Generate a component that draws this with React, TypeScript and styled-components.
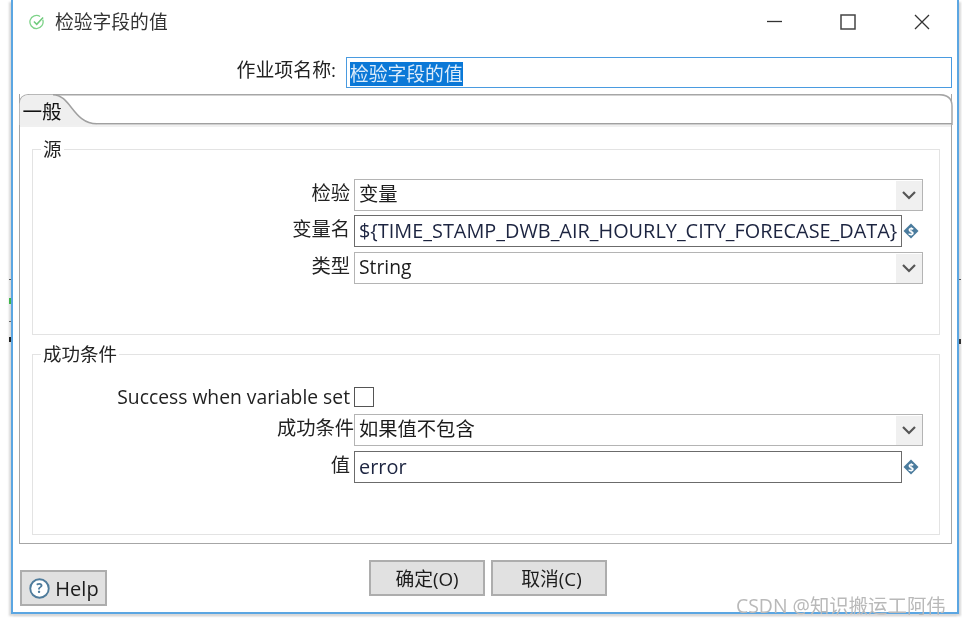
import React from "react";
import styled, { createGlobalStyle } from "styled-components";

const CJK = `"Open Sans", "Noto Sans CJK SC", sans-serif`;

const Global = createGlobalStyle`
  html, body { margin: 0; padding: 0; background: #fff; }
  body { width: 962px; height: 624px; overflow: hidden; font-family: ${CJK}; color: #1c1c1c; }
`;

const Stage = styled.div`
  position: relative;
  width: 962px;
  height: 624px;
  padding-left: 11px;
  box-sizing: border-box;
  background: #fff;
  filter: blur(0.35px);
`;

const Window = styled.div`
  width: 948px;
  height: 614px;
  box-sizing: border-box;
  border: solid #5ba6e2;
  border-width: 0 2px 2px 2px;
  box-shadow: -2px 2px 2px #d8d8d8, 2px 2px 2px #d8d8d8;
  background: #fff;
  display: flex;
  flex-direction: column;
  padding: 0 5px 0 6px;
`;

const PeekMark = styled.span<{ $x: number; $y: number; $c: string; $h?: number }>`
  position: absolute;
  left: ${(p) => p.$x}px;
  top: ${(p) => p.$y}px;
  width: 2px;
  height: ${(p) => p.$h ?? 1}px;
  background: ${(p) => p.$c};
`;

const TitleBar = styled.header`
  height: 44px;
  display: flex;
  align-items: center;
  padding-left: 10px;
  flex: none;
`;

const TitleText = styled.span`
  font-size: 18.8px;
  line-height: 44px;
  margin-left: 10px;
  flex: 1;
  color: #333;
`;

const Controls = styled.div`
  display: flex;
  align-items: center;
  gap: 58px;
  padding-right: 22px;
  color: #333;
`;

const NameRow = styled.div`
  height: 31px;
  margin-top: 13px;
  display: flex;
  align-items: center;
  justify-content: flex-end;
  gap: 10px;
  flex: none;
`;

const NameLabel = styled.label`
  font-size: 18.9px;
  color: #222;
  position: relative;
  top: -4px;
`;

const NameInput = styled.div`
  width: 606px;
  height: 31px;
  box-sizing: border-box;
  border: 1.5px solid #4a9be0;
  display: flex;
  align-items: center;
  padding: 2px 0 0 3px;
  font-size: 18.8px;
`;

const Selected = styled.span`
  background: #0a78d7;
  color: #dcecfa;
  line-height: 24px;
`;

const Folder = styled.section`
  margin-top: 6px;
  width: 933px;
  height: 450px;
  box-sizing: border-box;
  border: 1.5px solid #a6a6a6;
  border-top: none;
  flex: none;
  display: flex;
  flex-direction: column;
`;

const TabStrip = styled.div`
  height: 30px;
  flex: none;
  margin: 0 -1.5px;
  position: relative;
  display: flex;
  align-items: center;
`;

const TabShape = styled.svg`
  position: absolute;
  left: 0;
  top: 0;
`;

const TabLabel = styled.span`
  position: relative;
  font-size: 19.6px;
  padding-left: 4px;
  top: 1px;
  color: #111;
`;

const FolderBody = styled.div`
  flex: 1;
  border-top: 3px solid #f0f0f0;
  padding: 11px 11.5px 8px 12px;
  display: flex;
  flex-direction: column;
`;

const Group = styled.fieldset<{ $height: number; $mt?: number }>`
  margin: ${(p) => p.$mt ?? 0}px 0 0 0;
  padding: 0;
  height: ${(p) => p.$height}px;
  box-sizing: border-box;
  border: 1.5px solid #e3e3e3;
  flex: none;
  min-width: 0;
`;

const GroupTitle = styled.legend`
  font-size: 18.5px;
  line-height: 22px;
  padding: 0 2px 0 2px;
  margin-left: 8px;
  color: #222;
`;

const GroupBody = styled.div<{ $top: number }>`
  padding-top: ${(p) => p.$top}px;
  display: flex;
  flex-direction: column;
`;

const Row = styled.div<{ $mt?: number }>`
  display: flex;
  align-items: stretch;
  margin-top: ${(p) => p.$mt ?? 0}px;
`;

const FieldLabel = styled.label<{ $gap?: number; $lh?: number }>`
  width: 321px;
  flex: none;
  text-align: right;
  font-size: 19.3px;
  line-height: ${(p) => p.$lh ?? 28}px;
  padding-right: ${(p) => p.$gap ?? 4}px;
  box-sizing: border-box;
  color: #222;
  white-space: nowrap;
`;

const Combo = styled.div`
  width: 569px;
  height: 32px;
  box-sizing: border-box;
  border: 1.5px solid #b4b4b4;
  display: flex;
  align-items: center;
  justify-content: space-between;
  font-size: 19.3px;
  padding-left: 4px;
  background: #fff;
`;

const ComboText = styled.span`
  line-height: 26px;
  margin-bottom: 2px;
`;

const ComboArrow = styled.span`
  width: 26px;
  height: 29px;
  background: #f0f0f0;
  display: flex;
  align-items: center;
  justify-content: center;
`;

const TextField = styled.div`
  width: 548px;
  height: 32px;
  box-sizing: border-box;
  border: 1.5px solid #6b6b6b;
  display: flex;
  align-items: center;
  padding: 0 0 2px 4px;
  font-size: 19.9px;
  white-space: nowrap;
  overflow: hidden;
  color: #1c2440;
`;

const VarIcon = styled.svg`
  margin-left: 1px;
  align-self: center;
  flex: none;
`;

const Checkbox = styled.span`
  width: 20px;
  height: 20px;
  box-sizing: border-box;
  border: 1.5px solid #555;
  display: block;
`;

const Footer = styled.footer`
  flex: 1;
  display: flex;
  align-items: flex-start;
`;

const FlatButton = styled.button`
  font-family: inherit;
  background: #e1e1e1;
  border: 2px solid #adadad;
  color: #1c1c1c;
  box-sizing: border-box;
  padding: 0;
  display: flex;
  align-items: center;
  justify-content: center;
`;

const HelpButton = styled(FlatButton)`
  width: 87px;
  height: 36px;
  margin: 26px 0 0 1px;
  font-size: 20px;
  gap: 5px;
  padding-left: 1px;
`;

const ActionButton = styled(FlatButton)<{ $shift?: number }>`
  width: 116px;
  height: 36px;
  margin-top: 16px;
  font-size: 18.8px;
  padding-left: ${(p) => p.$shift ?? 0}px;
`;

const Actions = styled.div`
  display: flex;
  gap: 6px;
  margin-left: 262px;
`;

const Watermark = styled.div`
  position: absolute;
  left: 736px;
  top: 595px;
  font-size: 19.4px;
  line-height: 22px;
  color: #b9b9b9;
  white-space: nowrap;
`;

const Chevron = () => (
  <svg width="16" height="10" viewBox="0 0 16 10">
    <path d="M2 2 L8 8 L14 2" fill="none" stroke="#555" strokeWidth="2.2" />
  </svg>
);

const Dollar = () => (
  <VarIcon width="16" height="16" viewBox="0 0 16 16">
    <path d="M8 0.5 L15.5 8 L8 15.5 L0.5 8 Z" fill="#4a7b9d" />
    <text x="8" y="11.5" textAnchor="middle" fontSize="10" fontWeight="700" fill="#fff" fontFamily="Open Sans">$</text>
  </VarIcon>
);

export default function App() {
  return (
    <Stage>
      <Global />
      <PeekMark $x={9} $y={279} $c="#555" />
      <PeekMark $x={9} $y={298} $c="#3fb54a" $h={6} />
      <PeekMark $x={9} $y={321} $c="#666" />
      <PeekMark $x={9} $y={337} $c="#222" $h={5} />
      <PeekMark $x={959} $y={279} $c="#555" />
      <PeekMark $x={959} $y={339} $c="#333" $h={5} />
      <Window>
        <TitleBar>
          <svg width="16" height="16" viewBox="0 0 17 17">
            <path d="M14.6 6.2 A7 7 0 1 1 11.8 2.6" fill="none" stroke="#7ed389" strokeWidth="1.4" />
            <path d="M5.2 8 L8.2 11 L15 3.6" fill="none" stroke="#6fca7c" strokeWidth="1.6" />
          </svg>
          <TitleText>检验字段的值</TitleText>
          <Controls>
            <svg width="15" height="15" viewBox="0 0 15 15"><path d="M0 6.5 H15" stroke="#333" strokeWidth="1.3" /></svg>
            <svg width="16" height="16" viewBox="0 0 16 16"><rect x="1" y="1" width="14" height="14" fill="none" stroke="#444" strokeWidth="1.5" /></svg>
            <svg width="16" height="16" viewBox="0 0 16 16"><path d="M1 1 L15 15 M15 1 L1 15" stroke="#333" strokeWidth="1.3" /></svg>
          </Controls>
        </TitleBar>
        <NameRow>
          <NameLabel>作业项名称:</NameLabel>
          <NameInput><Selected>检验字段的值</Selected></NameInput>
        </NameRow>
        <Folder>
          <TabStrip>
            <TabShape width="934" height="31" viewBox="0 0 934 31">
              <path d="M0.7 31 V10 Q0.7 0.7 11 0.7 H920 Q933 0.7 933 12 V31" fill="#fff" stroke="#a6a6a6" strokeWidth="1.5" />
              <path d="M0.7 31 V10 Q0.7 0.7 11 0.7 H34 C52 0.7 54 30 78 30 L78 31 Z" fill="#efefef" stroke="none" />
              <path d="M34 0.7 C52 0.7 54 29.8 78 29.8 H933" fill="none" stroke="#a0a0a0" strokeWidth="1.5" />
            </TabShape>
            <TabLabel>一般</TabLabel>
          </TabStrip>
          <FolderBody>
            <Group $height={197}>
              <GroupTitle>源</GroupTitle>
              <GroupBody $top={19}>
                <Row>
                  <FieldLabel>检验</FieldLabel>
                  <Combo><ComboText>变量</ComboText><ComboArrow><Chevron /></ComboArrow></Combo>
                </Row>
                <Row $mt={4}>
                  <FieldLabel>变量名</FieldLabel>
                  <TextField>{"${TIME_STAMP_DWB_AIR_HOURLY_CITY_FORECASE_DATA}"}</TextField>
                  <Dollar />
                </Row>
                <Row $mt={5}>
                  <FieldLabel>类型</FieldLabel>
                  <Combo><ComboText>String</ComboText><ComboArrow><Chevron /></ComboArrow></Combo>
                </Row>
              </GroupBody>
            </Group>
            <Group $height={192} $mt={8}>
              <GroupTitle>成功条件</GroupTitle>
              <GroupBody $top={22}>
                <Row>
                  <FieldLabel $lh={20}>Success when variable set</FieldLabel>
                  <Checkbox />
                </Row>
                <Row $mt={7}>
                  <FieldLabel $gap={0}>成功条件</FieldLabel>
                  <Combo><ComboText>如果值不包含</ComboText><ComboArrow><Chevron /></ComboArrow></Combo>
                </Row>
                <Row $mt={5}>
                  <FieldLabel>值</FieldLabel>
                  <TextField>error</TextField>
                  <Dollar />
                </Row>
              </GroupBody>
            </Group>
          </FolderBody>
        </Folder>
        <Footer>
          <HelpButton>
            <svg width="21" height="21" viewBox="0 0 20 20">
              <circle cx="10" cy="10" r="8.8" fill="#fff" stroke="#4f7c9c" strokeWidth="1.8" />
              <text x="10" y="14.5" textAnchor="middle" fontSize="13" fontWeight="700" fill="#4f7c9c" fontFamily="Open Sans">?</text>
            </svg>
            Help
          </HelpButton>
          <Actions>
            <ActionButton>确定(O)</ActionButton>
            <ActionButton $shift={5}>取消(C)</ActionButton>
          </Actions>
        </Footer>
      </Window>
      <Watermark>CSDN @知识搬运工阿伟</Watermark>
    </Stage>
  );
}
